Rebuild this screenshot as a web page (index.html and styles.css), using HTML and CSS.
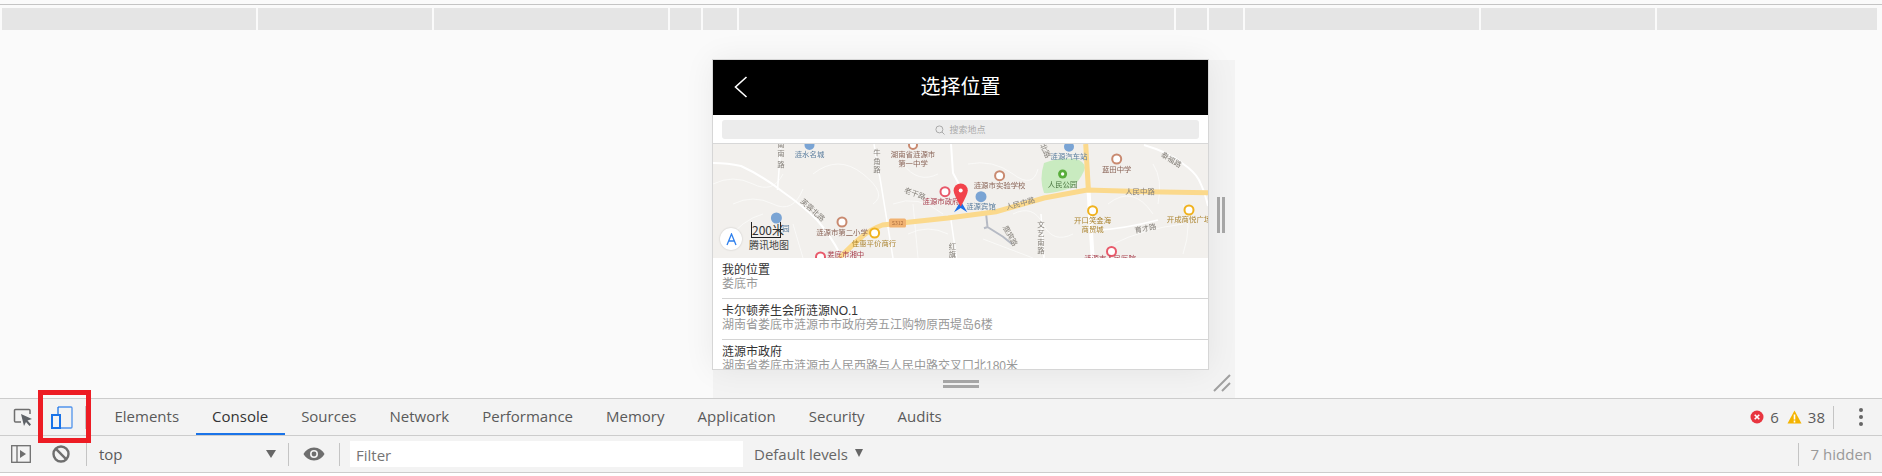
FILE: index.html
```html
<!DOCTYPE html>
<html lang="zh">
<head>
<meta charset="utf-8">
<title>选择位置</title>
<link rel="stylesheet" href="styles.css">
</head>
<body>
<div class="page">
  <div class="viewport">
    <div class="media-bar">
      <span class="seg s1"></span><span class="seg s2"></span><span class="seg s3"></span><span class="seg s4"></span><span class="seg s5"></span><span class="seg s6"></span><span class="seg s4"></span><span class="seg s5"></span><span class="seg s3"></span><span class="seg s2"></span><span class="seg s7"></span>
    </div>
    <div class="device-wrap">
      <div class="phone">
        <header class="nav">
          <svg class="back" width="14" height="22" viewBox="0 0 14 22"><path d="M12.5 1 L1.5 11 L12.5 21" fill="none" stroke="#fff" stroke-width="1.6"/></svg>
          <h1 class="nav-title">选择位置</h1>
        </header>
        <div class="search">
          <div class="search-box">
            <svg width="10" height="10" viewBox="0 0 10 10"><circle cx="4.4" cy="4.4" r="3.5" fill="none" stroke="#aaa" stroke-width="1"/><path d="M7 7 L9.5 9.5" stroke="#aaa" stroke-width="1"/></svg>
            <span>搜索地点</span>
          </div>
        </div>
        <div class="map">
          <svg class="map-svg" width="495" height="114" viewBox="0 0 495 114">
            <rect width="495" height="114" fill="#f2f0ed"/>
            <path class="park" d="M331 19 Q350 12 366 16 Q374 20 371 27 Q366 38 358 44 Q340 50 331 49 Q326 35 331 19Z"/>
            <g class="thin">
              <path d="M0 40 Q20 30 40 40 T70 30 M20 60 Q40 50 60 60 T90 45 M10 100 Q30 75 50 70 M100 30 Q125 10 150 30 T160 60 M190 20 Q205 40 225 30 M180 60 Q205 50 230 70 M195 90 Q215 80 235 90 M255 20 Q280 15 300 30 T325 25 M300 70 Q320 60 330 80 T360 90 M395 60 Q420 40 440 70 M400 100 Q430 85 470 80 M440 20 Q450 35 445 60 M470 60 Q480 80 470 110 M80 80 L90 114 M200 60 L205 114 M270 95 L320 114"/>
            </g>
            <g class="white">
              <path class="w2" d="M0 19 Q15 19 28 22 Q50 32 70 48 Q90 62 104 76 Q118 92 127 110"/>
              <path class="w1" d="M68 0 L64.500 46 M161 0 L168 40 L180 114 M238 76 L243.500 114"/>
              <path class="w2" d="M238 0 L240 29 L249 46 M431 1 Q455 8 469 19 Q482 28 486 36 Q492 48 495 62"/>
              <path class="w3" d="M375.500 46 L379.600 114"/>
              <path class="w1" d="M328 70 L331 114 M385 86 Q410 85 445 76"/>
            </g>
            <path class="bridge" d="M273 69 L274.500 83 L290 92.700 L299 100 M271 84.300 L274.500 83"/>
            <path class="yellow" d="M372.700 0 L375.400 46"/>
            <path class="yellow" d="M126.500 114 Q140 100 149 92.700 Q158 85 169.500 81 L235 74 L283 67.700 L331 54 L374 46 L434.600 47.700 L495 48.700"/>
            <rect x="176" y="74.500" width="17" height="9" rx="1.500" fill="#f1b271"/>
            <text class="lb shield" x="184.600" y="81.300">S312</text>

            <g class="ic ic-blue"><circle cx="96.500" cy="1" r="4"/><circle cx="356" cy="2.700" r="4"/><circle cx="268" cy="52.700" r="4.500"/><circle cx="63.400" cy="74" r="4.500"/></g>
            <g class="ic ic-brown"><circle cx="200" cy="1" r="4"/><circle cx="403.700" cy="15" r="4.500"/><circle cx="286.600" cy="31.700" r="4.500"/><circle cx="129" cy="78" r="4.500"/></g>
            <g class="ic ic-red"><circle cx="232" cy="47.700" r="4.500"/><circle cx="107.500" cy="113" r="4.500"/><circle cx="398.500" cy="107.500" r="4.500"/></g>
            <g class="ic ic-yellow"><circle cx="379.600" cy="66.700" r="4.500"/><circle cx="476" cy="66" r="4.500"/><circle cx="161.600" cy="89" r="4.500"/></g>
            <circle cx="349.600" cy="30" r="4.500" fill="#58ad3a"/><circle cx="349.600" cy="30" r="1.700" fill="#fff"/>

            <g class="lb c-blue">
              <text x="96.500" y="13">涟水名城</text>
              <text x="356" y="14.500">涟源汽车站</text>
              <text x="268" y="65">涟源宾馆</text>
              <text x="73" y="87">园</text>
            </g>
            <g class="lb c-brown">
              <text x="200" y="13">湖南省涟源市</text>
              <text x="200" y="22">第一中学</text>
              <text x="403.700" y="28">蓝田中学</text>
              <text x="286.600" y="43.500">涟源市实验学校</text>
              <text x="129" y="91">涟源市第二小学</text>
            </g>
            <g class="lb c-red">
              <text x="228" y="60">涟源市政府</text>
              <text x="132.700" y="112.500">娄底市湘中</text>
              <text x="397" y="116.500">涟源市人民医院</text>
            </g>
            <g class="lb c-yellow">
              <text x="379.600" y="79">开口笑金海</text>
              <text x="379.600" y="88">商贸城</text>
              <text x="476" y="78">开成商悦广场</text>
              <text x="161" y="102">佳惠平价商行</text>
            </g>
            <g class="lb c-green"><text x="349.600" y="43">人民公园</text></g>
            <g class="lb c-road">
              <text x="427" y="50">人民中路</text>
              <text transform="translate(308 62) rotate(-15)">人民中路</text>
              <text transform="translate(201 52) rotate(20)">老干路</text>
              <text transform="translate(98 68) rotate(42)">芙蓉北路</text>
              <text transform="translate(433 87) rotate(-12)">育才路</text>
              <text transform="translate(295 93) rotate(62)">鹿宾路</text>
              <text transform="translate(330 8) rotate(65)">北路</text>
              <text transform="translate(457 18) rotate(32)">泰福路</text>
              <text x="164" y="10.500">牛</text><text x="164" y="19.500">角</text><text x="164" y="28">路</text>
              <text x="68" y="3">南</text><text x="68" y="12">南</text><text x="68" y="23">路</text>
              <text x="328" y="83">文</text><text x="328" y="92">艺</text><text x="328" y="100.500">南</text><text x="328" y="109">路</text>
              <text x="239.400" y="104.500">红</text><text x="239.400" y="113">旗</text>
            </g>

            <path d="M241 68.300 L247.700 57 L254.300 68.300 L247.700 64Z" fill="#1b6fe8"/>
            <path d="M247.700 62.700 Q240.600 50 240.600 46.500 A7.100 7.100 0 0 1 254.800 46.500 Q254.800 50 247.700 62.700Z" fill="#f2434b"/>
            <circle cx="247.700" cy="46.500" r="2" fill="#fff"/>
          </svg>
          <div class="compass">
            <svg width="11" height="13" viewBox="0 0 11 13"><path d="M1 12 L5.500 1 L10 12 M3 8 L8 8" fill="none" stroke="#2f80ed" stroke-width="1.300"/></svg>
          </div>
          <div class="scale">
            <div class="scale-num">200米</div>
            <div class="scale-name">腾讯地图</div>
          </div>
        </div>
        <ul class="places">
          <li class="place"><p class="place-name">我的位置</p><p class="place-addr">娄底市</p></li>
          <li class="place"><p class="place-name">卡尔顿养生会所涟源NO.1</p><p class="place-addr">湖南省娄底市涟源市市政府旁五江购物原西堤岛6楼</p></li>
          <li class="place"><p class="place-name">涟源市政府</p><p class="place-addr">湖南省娄底市涟源市人民西路与人民中路交叉口北180米</p></li>
        </ul>
      </div>
      <div class="side-handle"><span></span><span></span></div>
      <div class="bottom-handle"><span></span><span></span></div>
      <svg class="corner" width="18" height="18" viewBox="0 0 18 18"><path d="M1 17 L17 1 M9 17 L17 9" stroke="#a0a0a0" stroke-width="2" fill="none"/></svg>
    </div>
  </div>

  <div class="devtools">
    <div class="tabbar">
      <div class="tool-icons">
        <svg width="20" height="20" viewBox="0 0 20 20"><path d="M8 15 H2.500 A1 1 0 0 1 1.500 14 V3.500 A1 1 0 0 1 2.500 2.500 H16 A1 1 0 0 1 17 3.500 V7" fill="none" stroke="#6e6e6e" stroke-width="1.500"/><path d="M8 7 L19 12 L14.500 13.500 L18 17.500 L16.500 19 L13 15 L11 19Z" fill="#5f6368"/></svg>
        <svg width="22" height="23" viewBox="0 0 22 23"><path d="M7 1 H20 A1 1 0 0 1 21 2 V21 A1 1 0 0 1 20 22 H9" fill="none" stroke="#1a73e8" stroke-width="1.300" opacity=".75"/><path d="M7 1 V8" stroke="#1a73e8" stroke-width="1.300"/><rect x="1" y="9" width="8" height="13" fill="none" stroke="#1a73e8" stroke-width="2"/></svg>
      </div>
      <span class="sep tab-sep"></span>
      <nav class="tabs">
        <span class="tab">Elements</span>
        <span class="tab active">Console</span>
        <span class="tab">Sources</span>
        <span class="tab">Network</span>
        <span class="tab">Performance</span>
        <span class="tab">Memory</span>
        <span class="tab">Application</span>
        <span class="tab">Security</span>
        <span class="tab">Audits</span>
      </nav>
      <div class="status">
        <svg width="14" height="14" viewBox="0 0 14 14"><circle cx="7" cy="7" r="6.500" fill="#e8353f"/><path d="M4.700 4.700 L9.300 9.300 M9.300 4.700 L4.700 9.300" stroke="#fff" stroke-width="1.600"/></svg>
        <span class="count c1">6</span>
        <svg width="15" height="14" viewBox="0 0 15 14"><path d="M7.500 0.500 L14.500 13.500 H0.500Z" fill="#f4b400"/><path d="M7.500 4.500 V9.500 M7.500 10.500 V12.500" stroke="#fff" stroke-width="1.600"/></svg>
        <span class="count">38</span>
        <span class="sep status-sep"></span>
        <span class="dots"><i></i><i></i><i></i></span>
      </div>
    </div>
    <div class="consolebar">
      <svg class="i-side" width="20" height="18" viewBox="0 0 20 18"><rect x="0.700" y="0.700" width="18.600" height="16.600" fill="none" stroke="#6e6e6e" stroke-width="1.300"/><path d="M6 1 V17" stroke="#6e6e6e" stroke-width="1.300"/><path d="M9 5 L15 9 L9 13Z" fill="#6e6e6e"/></svg>
      <svg class="i-clear" width="18" height="18" viewBox="0 0 18 18"><circle cx="9" cy="9" r="7.500" fill="none" stroke="#6e6e6e" stroke-width="2.400"/><path d="M3.700 3.700 L14.300 14.300" stroke="#6e6e6e" stroke-width="2.400"/></svg>
      <span class="sep"></span>
      <div class="context"><span>top</span><i class="tri"></i></div>
      <span class="sep"></span>
      <svg class="i-eye" width="22" height="14" viewBox="0 0 22 14"><path d="M11 0.500 C6 0.500 2.500 3.500 0.500 7 C2.500 10.500 6 13.500 11 13.500 C16 13.500 19.500 10.500 21.500 7 C19.500 3.500 16 0.500 11 0.500Z" fill="#6e6e6e"/><circle cx="11" cy="7" r="4" fill="#f3f3f3"/><circle cx="11" cy="7" r="2.400" fill="#6e6e6e"/></svg>
      <span class="sep"></span>
      <div class="filter">Filter</div>
      <div class="levels"><span>Default levels</span><i class="tri small"></i></div>
      <div class="hidden-count"><span class="sep"></span><span>7 hidden</span></div>
    </div>
    <div class="log">Make sure to turn on production mode when deploying for production.</div>
  </div>
</div>
<div class="marker"></div>
</body>
</html>
```
FILE: styles.css
```css
* { box-sizing: border-box; }
html, body { margin: 0; padding: 0; height: 476px; overflow: hidden; background: #fafafa; }
body { font-family: "Open Sans", "Liberation Sans", sans-serif; position: relative; }
p, ul, h1 { margin: 0; padding: 0; }

.page { display: flex; flex-direction: column; height: 476px; }
.viewport { height: 398px; padding-top: 4px; flex: none; overflow: hidden; position: relative; }

.media-bar { height: 26px; border-top: 1px solid #c4c4c4; padding: 3px 0 0 2px; background: #fafafa; display: flex; gap: 2px; }
.seg { height: 22px; background: #e5e5e5; display: block; flex: none; }
.s1 { width: 254px; }
.s2 { width: 174px; }
.s3 { width: 234px; }
.s4 { width: 31px; }
.s5 { width: 34px; }
.s6 { width: 435px; }
.s7 { width: 220px; }

.device-wrap { position: relative; margin: 30px 0 0 713px; width: 522px; height: 338px; background: #f3f3f3; }
.phone { width: 495px; height: 309px; background: #fff; box-shadow: 0 0 0 1px #d6d6d6, 0 0 30px rgba(0,0,0,.07); overflow: hidden; font-family: "Liberation Sans", "Noto Sans CJK SC", sans-serif; position: relative; z-index: 1; }

.nav { height: 55px; background: #000; display: flex; align-items: center; justify-content: center; position: relative; }
.back { position: absolute; left: 21px; top: 16px; }
.nav-title { color: #fff; font-size: 20px; font-weight: 400; line-height: 55px; }

.search { height: 29px; padding: 5px 9px 0; border-bottom: 1px solid #d8d8d8; }
.search-box { height: 19px; background: #ececec; border-radius: 3px; display: flex; align-items: center; justify-content: center; gap: 4px; color: #aaa; font-size: 9px; }

.map { height: 114px; position: relative; overflow: hidden; }
.map-svg { display: block; filter: blur(.35px); }
.park { fill: #c9ebc0; }
.thin path { fill: none; stroke: #fbfbfa; stroke-width: .8; }
.white path { fill: none; stroke: #fff; }
.w1 { stroke-width: 1.5; }
.w2 { stroke-width: 2; }
.w3 { stroke-width: 4; }
.bridge { fill: none; stroke: #b6bac4; stroke-width: 2; }
.yellow { fill: none; stroke: #fbd98c; stroke-width: 5; }
.ic circle { fill: none; stroke-width: 2; }
.ic-blue circle { fill: #7aa4d4; stroke: #7aa4d4; }
.ic-brown circle { fill: #fff; stroke: #c98a70; }
.ic-red circle { fill: #fff; stroke: #e8596a; }
.ic-yellow circle { fill: #fff; stroke: #f0b21e; }
.lb { font-size: 7.4px; text-anchor: middle; font-family: "Noto Sans CJK SC", sans-serif; }
.shield { font-size: 5px; fill: #a5683b; }
.c-blue { fill: #5a7d9e; }
.c-brown { fill: #8a6558; }
.c-red { fill: #a8404f; }
.c-yellow { fill: #ab8430; }
.c-green { fill: #4f7a45; }
.c-road { fill: #85807a; }

.compass { position: absolute; left: 7px; top: 84px; width: 22px; height: 22px; border-radius: 50%; background: #fff; box-shadow: 0 0 2px rgba(0,0,0,.2); display: flex; align-items: center; justify-content: center; }
.scale { position: absolute; left: 36px; top: 78px; color: #333; font-family: "Noto Sans CJK SC", sans-serif; }
.scale-num { width: 30px; height: 16px; font-size: 12px; line-height: 15px; margin-left: 2px; border: 1px solid #222; border-width: 0 1px 1px; white-space: nowrap; }
.scale-num { border-top: 0; }
.scale-name { font-size: 10px; line-height: 14px; color: #444; margin-top: 0; white-space: nowrap; }

.places { list-style: none; background: #fff; border-top: 1px solid #d8d8d8; margin-top: -1px; }
.place { height: 41px; margin-left: 9px; padding-top: 5px; border-bottom: 1px solid #d4d4d4; overflow: hidden; font-size: 12px; line-height: 14px; }
.place-name { color: #333; }
.place-addr { color: #999; }

.side-handle { position: absolute; left: 504px; top: 137px; display: flex; gap: 2px; }
.side-handle span { width: 3px; height: 36px; background: #a8a8a8; display: block; }
.bottom-handle { position: absolute; left: 230px; top: 320px; display: flex; flex-direction: column; gap: 2px; }
.bottom-handle span { width: 36px; height: 3px; background: #a8a8a8; display: block; }
.corner { position: absolute; left: 500px; top: 314px; }

.devtools { height: 78px; background: #f3f3f3; border-top: 1px solid #ccc; flex: none; color: #5a5a5a; font-size: 15px; position: relative; }
.tabbar { height: 37px; border-bottom: 1px solid #ccc; display: flex; align-items: center; padding-left: 13px; }
.tool-icons { display: flex; align-items: center; gap: 18px; width: 72px; flex: none; }
.sep { width: 1px; height: 23px; background: #c4c4c4; display: block; flex: none; }
.tabs { display: flex; height: 36px; margin-left: 12px; }
.tab { padding: 0 16.5px; line-height: 34px; height: 36px; white-space: nowrap; flex: none; }
.tab.active { color: #333; border-bottom: 2px solid #1a73e8; }
.status { margin-left: auto; display: flex; align-items: center; font-size: 15px; padding-right: 19px; }
.count { margin: 0 8px 0 6px; }
.c1 { margin-right: 8px; }
.status-sep { margin-left: 0; }
.dots { display: flex; flex-direction: column; gap: 3px; margin-left: 25px; }
.dots i { display: block; width: 4px; height: 4px; border-radius: 50%; background: #666; }

.consolebar { height: 37px; border-bottom: 1px solid #ccc; display: flex; align-items: center; padding-left: 11px; position: relative; }
.i-side { flex: none; }
.i-clear { flex: none; margin: 0 16px 0 21px; }
.context { width: 201px; padding-left: 12px; display: flex; align-items: center; justify-content: space-between; padding-right: 12px; }
.tri { width: 0; height: 0; border-left: 5px solid transparent; border-right: 5px solid transparent; border-top: 8px solid #666; display: block; }
.tri.small { border-left-width: 4.5px; border-right-width: 4.5px; border-top-width: 8px; margin: -3px 0 0 7px; }
.i-eye { flex: none; margin: 0 14px; }
.filter { width: 393px; height: 26px; background: #fff; margin-left: 10px; padding-left: 6px; line-height: 28px; color: #757575; }
.levels { display: flex; align-items: center; margin-left: 11px; color: #666; }
.hidden-count { margin-left: auto; display: flex; align-items: center; gap: 12px; padding-right: 10px; color: #999; }

.log { height: 3px; overflow: hidden; background: #fff; color: #333; font-size: 14px; line-height: 20px; padding-left: 34px; white-space: nowrap; }

.marker { position: absolute; left: 38px; top: 390px; width: 53px; height: 53px; border: 5px solid #ed1c24; z-index: 5; pointer-events: none; }
```
